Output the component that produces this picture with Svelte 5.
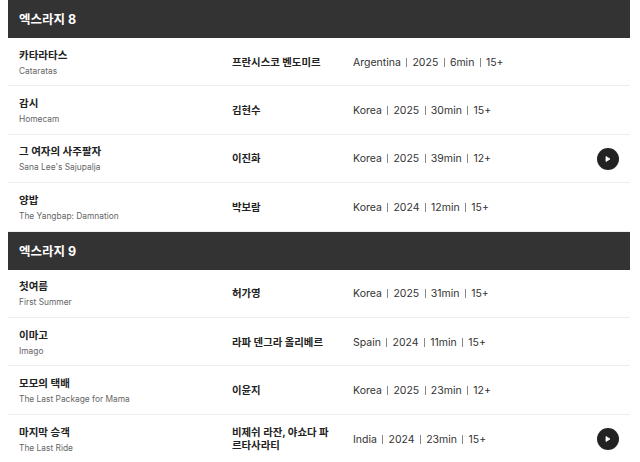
<script>
	const sections = [
		{
			title: '엑스라지 8',
			films: [
				{ ko: '카타라타스', en: 'Cataratas', director: '프란시스코 벤도미르', meta: ['Argentina', '2025', '6min', '15+'] },
				{ ko: '감시', en: 'Homecam', director: '김현수', meta: ['Korea', '2025', '30min', '15+'] },
				{ ko: '그 여자의 사주팔자', en: "Sana Lee's Sajupalja", director: '이진화', meta: ['Korea', '2025', '39min', '12+'], play: true },
				{ ko: '양밥', en: 'The Yangbap: Damnation', director: '박보람', meta: ['Korea', '2024', '12min', '15+'] }
			]
		},
		{
			title: '엑스라지 9',
			films: [
				{ ko: '첫여름', en: 'First Summer', director: '허가영', meta: ['Korea', '2025', '31min', '15+'] },
				{ ko: '이마고', en: 'Imago', director: '라파 덴그라 올리베르', meta: ['Spain', '2024', '11min', '15+'] },
				{ ko: '모모의 택배', en: 'The Last Package for Mama', director: '이윤지', meta: ['Korea', '2025', '23min', '12+'] },
				{ ko: '마지막 승객', en: 'The Last Ride', director: '비제쉬 라잔, 야쇼다 파르타사라티', meta: ['India', '2024', '23min', '15+'], play: true }
			]
		}
	];
</script>

<div class="page">
	{#each sections as section}
		<h2 class="section-title">{section.title}</h2>
		{#each section.films as film}
			<div class="film">
				<div class="names">
					<div class="ko">{film.ko}</div>
					<div class="en">{film.en}</div>
				</div>
				<div class="director">{film.director}</div>
				<div class="meta">
					{#each film.meta as item, i}
						{#if i > 0}<span class="sep"></span>{/if}<span>{item}</span>
					{/each}
				</div>
				{#if film.play}
					<button class="play" aria-label="play">
						<svg width="8" height="8" viewBox="0 0 8 8"><path d="M2 1.5 L6 4 L2 6.5 Z" fill="#fff" stroke="#fff" stroke-width="0.8" stroke-linejoin="round" /></svg>
					</button>
				{/if}
			</div>
		{/each}
	{/each}
</div>

<style>
	:global(body) {
		background: #fff;
		overflow: hidden;
	}

	.page {
		width: 622px;
		margin-left: 8px;
		font-family: Inter, 'Noto Sans CJK KR', sans-serif;
		color: #222;
	}

	.section-title {
		margin: 0;
		height: 38px;
		padding: 0 0 1px 11px;
		box-sizing: border-box;
		display: flex;
		align-items: center;
		background: #333;
		color: #fff;
		font-size: 12.5px;
		font-weight: 700;
	}

	.film {
		display: flex;
		align-items: center;
		border-bottom: 1px solid #eee;
		box-sizing: border-box;
		height: 48.4px;
		padding-top: 1px;
	}

	.film:last-child {
		border-bottom: none;
	}

	.names {
		width: 213px;
		padding-left: 11px;
		flex: none;
	}

	.ko {
		font-size: 10.5px;
		font-weight: 700;
		line-height: 16px;
	}

	.en {
		font-size: 8.4px;
		color: #666;
		line-height: 12px;
		margin-top: 1px;
	}

	.director {
		width: 99px;
		margin-right: 22px;
		flex: none;
		font-size: 10.4px;
		font-weight: 700;
		line-height: 13px;
	}

	.meta {
		display: flex;
		align-items: center;
		font-size: 10.5px;
		color: #333;
	}

	.sep {
		width: 1px;
		height: 9px;
		background: #888;
		margin: 0 5.3px;
	}

	.play {
		margin-left: auto;
		margin-right: 11px;
		width: 22px;
		height: 22px;
		border: none;
		border-radius: 50%;
		padding: 0;
		background: #222;
		display: flex;
		align-items: center;
		justify-content: center;
	}
</style>
